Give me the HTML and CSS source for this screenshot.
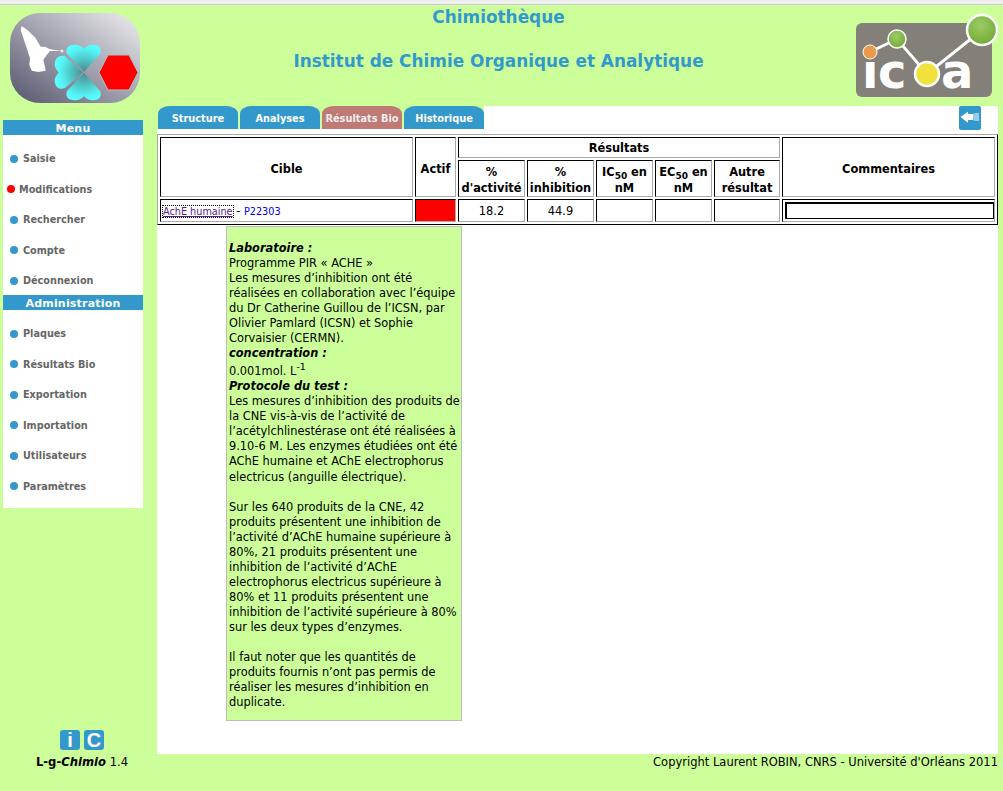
FILE: index.html
```html
<!DOCTYPE html>
<html lang="fr">
<head>
    <meta charset="UTF-8">
    <title>Chimiothèque</title>
    <link rel="stylesheet" href="styles.css">
</head>
<body>
    <header class="top">
        <svg class="logo-left" width="130" height="90" viewBox="0 0 130 90">
            <defs>
                <linearGradient id="plate" x1="0" y1="1" x2="1" y2="0">
                    <stop offset="0" stop-color="#55556c"/>
                    <stop offset="1" stop-color="#eeeef0"/>
                </linearGradient>
                <radialGradient id="petal" gradientUnits="userSpaceOnUse" cx="74" cy="59.5" r="30">
                    <stop offset="0" stop-color="#4a8a8c"/>
                    <stop offset="0.8" stop-color="#55f4f6"/>
                    <stop offset="1" stop-color="#5cffff"/>
                </radialGradient>
            </defs>
            <rect width="130" height="90" rx="30" fill="url(#plate)"/>
            <path d="M11.7 13 L18.3 17.7 L25 24.3 L30.7 33.7 L35 33.7 L40 36.3 L51.7 38 L40 38 L36.7 42 L33.3 47 L35 53.7 L35.7 57.7 L28.3 59 L21.7 57.7 L19.3 52 L20 45.3 L17.3 37 L14 27 L10.7 17 Z" fill="#fff"/>
            <circle cx="52" cy="38" r="1.6" fill="#e8e8e8"/>
            <path d="M74 59 L57 41 C55 36 58 32 63 32 C68 31 72 33 74 36 C76 33 80 31 85 32 C90 32 92 37 90 41 Z" fill="url(#petal)"/>
            <path d="M74 60 L57 78 C55 83 58 87 63 87 C68 88 72 86 74 83 C76 86 80 88 85 87 C90 87 92 82 90 78 Z" fill="url(#petal)"/>
            <path d="M73 59.5 L55 43 C50 42 46 44 45 49 C44 53 46 57 49 59.5 C46 62 44 66 45 70 C46 75 50 77 55 75 Z" fill="url(#petal)"/>
            <path d="M89 59.5 L98 42 H119 L128 59.5 L119 77 H98 Z" fill="#f00" stroke="#a8c4c8"/>
        </svg>
        <div class="titles">
            <h1>Chimiothèque</h1>
            <h2>Institut de Chimie Organique et Analytique</h2>
        </div>
        <svg class="logo-right" width="143" height="98" viewBox="0 0 143 98">
            <defs>
                <radialGradient id="leaf" cx="0.45" cy="0.35" r="0.7">
                    <stop offset="0" stop-color="#9ccc65"/>
                    <stop offset="1" stop-color="#6ea832"/>
                </radialGradient>
            </defs>
            <rect x="1" y="15" width="136" height="74" rx="6" fill="#848079"/>
            <path d="M15 44 L42 31 L72 66 L127 22" fill="none" stroke="#fff" stroke-width="3"/>
            <text x="7" y="80" class="icoa-text">ı</text>
            <text x="23" y="80" class="icoa-text">c</text>
            <text x="86" y="80" class="icoa-text">a</text>
            <circle cx="15" cy="44" r="7" fill="#e99a4b" stroke="#fff" stroke-width="1"/>
            <circle cx="42" cy="31" r="9" fill="url(#leaf)" stroke="#fff" stroke-width="1.5"/>
            <circle cx="72" cy="66" r="12" fill="#f0e13c" stroke="#fff" stroke-width="2.5"/>
            <circle cx="127" cy="22" r="15" fill="url(#leaf)" stroke="#fff" stroke-width="2.5"/>
        </svg>
    </header>

    <div class="page">
        <aside class="side">
            <nav class="menu">
                <div class="menu-title">Menu</div>
                <ul>
                    <li><a href="#">Saisie</a></li>
                    <li class="current"><a href="#">Modifications</a></li>
                    <li><a href="#">Rechercher</a></li>
                    <li><a href="#">Compte</a></li>
                    <li><a href="#">Déconnexion</a></li>
                </ul>
                <div class="menu-title">Administration</div>
                <ul>
                    <li><a href="#">Plaques</a></li>
                    <li><a href="#">Résultats Bio</a></li>
                    <li><a href="#">Exportation</a></li>
                    <li><a href="#">Importation</a></li>
                    <li><a href="#">Utilisateurs</a></li>
                    <li><a href="#">Paramètres</a></li>
                </ul>
            </nav>
            <div class="credits">
                <div class="badges">
                    <span class="badge">i</span>
                    <span class="badge">C</span>
                </div>
                <div class="version"><b>L-g-<i>Chimio</i></b> 1.4</div>
            </div>
        </aside>

        <main class="panel">
            <div class="tabs">
                <div class="tab-group">
                    <a class="tab" href="#">Structure</a>
                    <a class="tab" href="#">Analyses</a>
                    <a class="tab active" href="#">Résultats Bio</a>
                    <a class="tab" href="#">Historique</a>
                </div>
                <a class="back" href="#">
                    <svg width="22" height="24" viewBox="0 0 22 24">
                        <rect width="22" height="24" rx="2" fill="#3399cc"/>
                        <path d="M1.5 11 L9 5.7 V8 H14 V14 H9 V16.7 Z" fill="#fff"/>
                        <path d="M15 7.5 V14.5 M17 7 V15 M19 7 V15" stroke="#fff" stroke-width="1"/>
                    </svg>
                </a>
            </div>

            <table class="results">
                <colgroup>
                    <col class="c-cible"><col class="c-actif"><col class="c-pct1"><col class="c-pct2">
                    <col class="c-ic"><col class="c-ec"><col class="c-autre"><col class="c-comm">
                </colgroup>
                <tr class="r-head1">
                    <th class="tall" rowspan="2">Cible</th>
                    <th class="tall" rowspan="2">Actif</th>
                    <th colspan="5">Résultats</th>
                    <th class="tall" rowspan="2">Commentaires</th>
                </tr>
                <tr class="r-head2">
                    <th>%<br>d'activité</th>
                    <th>%<br>inhibition</th>
                    <th>IC<sub>50</sub> en<br>nM</th>
                    <th>EC<sub>50</sub> en<br>nM</th>
                    <th>Autre<br>résultat</th>
                </tr>
                <tr class="r-data">
                    <td class="target"><a class="seen" href="#">AchE humaine</a> - <a href="#">P22303</a></td>
                    <td class="flag"></td>
                    <td>18.2</td>
                    <td>44.9</td>
                    <td></td>
                    <td></td>
                    <td></td>
                    <td class="comment"><input type="text"></td>
                </tr>
            </table>

            <div class="note">
                <b><i>Laboratoire :</i></b><br>
                Programme PIR « ACHE »<br>
                Les mesures d’inhibition ont été réalisées en collaboration avec l’équipe du Dr Catherine Guillou de l’ICSN, par Olivier Pamlard (ICSN) et Sophie Corvaisier (CERMN).<br>
                <b><i>concentration :</i></b><br>
                0.001mol. L<sup>-1</sup><br>
                <b><i>Protocole du test :</i></b><br>
                Les mesures d’inhibition des produits de la CNE vis-à-vis de l’activité de l’acétylchlinestérase ont été réalisées à 9.10-6 M. Les enzymes étudiées ont été AChE humaine et AChE electrophorus electricus (anguille électrique).<br>
                <br>
                Sur les 640 produits de la CNE, 42 produits présentent une inhibition de l’activité d’AChE humaine supérieure à 80%, 21 produits présentent une inhibition de l’activité d’AChE electrophorus electricus supérieure à 80% et 11 produits présentent une inhibition de l’activité supérieure à 80% sur les deux types d’enzymes.<br>
                <br>
                Il faut noter que les quantités de produits fournis n’ont pas permis de réaliser les mesures d’inhibition en duplicate.
            </div>
        </main>

        <footer class="copy">Copyright Laurent ROBIN, CNRS - Université d'Orléans 2011</footer>
    </div>
</body>
</html>
```

FILE: styles.css
```css
* {
    box-sizing: border-box;
}

body {
    margin: 0;
    height: 791px;
    overflow: hidden;
    background: #ccff99;
    border-top: 4px solid #eeeeee;
    font-family: "DejaVu Sans", Verdana, sans-serif;
    font-size: 11.4px;
    line-height: 15px;
    color: #000;
}

/* header */
.top {
    display: flex;
    height: 102px;
    box-shadow: inset 0 1px 0 #cccccc;
}

.logo-left {
    flex: none;
    margin: 9px 0 0 10px;
}

.logo-right {
    flex: none;
    margin: 4px 5px 0 0;
}

.icoa-text {
    font-family: "DejaVu Sans", sans-serif;
    font-weight: bold;
    font-size: 48px;
    fill: #fff;
}

.titles {
    flex: 1;
    text-align: center;
    color: #3399cc;
    padding-left: 2px;
}

.titles h1 {
    margin: 3px 0 0;
    font-size: 16.9px;
    line-height: 20px;
}

.titles h2 {
    margin: 24px 0 0;
    font-size: 16.9px;
    line-height: 20px;
}

/* layout */
.page {
    display: grid;
    grid-template-columns: 157px 841px;
    grid-template-rows: 648px 20px;
}

.side {
    grid-row: 1 / 3;
    display: flex;
    flex-direction: column;
    padding: 14px 14px 0 3px;
}

.menu {
    background: #fff;
    height: 388px;
}

.menu-title {
    background: #3399cc;
    color: #fff;
    font-weight: bold;
    font-size: 11px;
    line-height: 17px;
    height: 15px;
    text-align: center;
    letter-spacing: 0.2px;
}

.menu ul + .menu-title {
    margin-top: -1px;
}

.menu ul {
    list-style: none;
    margin: 0;
    padding: 8.5px 0 0;
}

.menu li {
    display: flex;
    align-items: center;
    height: 30.5px;
    padding-left: 7px;
}

.menu li::before {
    content: "";
    width: 8px;
    height: 8px;
    border-radius: 50%;
    background: #3399cc;
    margin-right: 5px;
}

.menu li.current {
    padding-left: 4px;
}

.menu li.current::before {
    background: #ff0000;
    margin-right: 4px;
}

.menu a {
    color: #666666;
    font-weight: bold;
    font-size: 9.7px;
    text-decoration: none;
}

.credits {
    margin-top: auto;
    padding: 0 0 4px 18px;
    text-align: center;
    font-size: 11.6px;
}

.badges {
    display: flex;
    justify-content: center;
    gap: 4px;
    margin-bottom: 5px;
}

.badge {
    width: 20px;
    height: 20px;
    border-radius: 3px;
    background: #3399cc;
    color: #fff;
    font-family: "Liberation Sans", sans-serif;
    font-weight: bold;
    font-size: 20px;
    line-height: 20px;
}

/* main panel */
.panel {
    background: #fff;
}

.tabs {
    display: flex;
    align-items: flex-start;
    height: 28px;
}

.tab-group {
    display: flex;
    gap: 2px;
    padding-left: 1px;
    background: #ccff99;
}

.tab {
    width: 80px;
    height: 23px;
    border-radius: 12px 12px 0 0 / 8px 8px 0 0;
    background: #3399cc;
    color: #fff;
    font-weight: bold;
    font-size: 9.8px;
    line-height: 25px;
    text-align: center;
    text-decoration: none;
}

.tab.active {
    background: #bf7a75;
    color: #eeeeee;
}

.back {
    margin-left: auto;
    margin-right: 17px;
    height: 24px;
}

.results {
    width: 841px;
    table-layout: fixed;
    border-collapse: separate;
    border-spacing: 2px;
    border: 1px solid;
    border-color: #aaaaaa #000 #000 #aaaaaa;
}

.c-cible { width: 253px; }
.c-actif { width: 41px; }
.c-pct1 { width: 67px; }
.c-pct2 { width: 67px; }
.c-ic { width: 57px; }
.c-ec { width: 57px; }
.c-autre { width: 66px; }
.c-comm { width: 213px; }

.results th,
.results td {
    border: 1px solid;
    border-color: #000 #aaaaaa #aaaaaa #000;
    padding: 2px 0 0;
    text-align: center;
    font-size: 11.4px;
}

.results th {
    font-weight: bold;
}

.results th.tall {
    padding-top: 4px;
}

.r-head1 { height: 21px; }
.r-head2 { height: 37px; line-height: 16px; }
.r-data { height: 23px; }

.results sub {
    font-size: 9px;
    line-height: 0;
}

.results td.target {
    text-align: left;
    padding-left: 2px;
}

.target a {
    font-size: 9.7px;
    color: #0000ee;
    text-decoration: none;
}

.target a.seen {
    color: #551a8b;
    text-decoration: underline;
    outline: 1px dotted #000;
}

.results td.flag {
    background: #ff0000;
}

.results td.comment {
    padding: 2px 0 2px 2px;
}

.comment input {
    display: block;
    width: 209px;
    height: 17px;
    padding: 0;
    border-style: solid;
    border-width: 2px 1px 1px 2px;
    border-color: #000;
    background: #fff;
}

.note {
    width: 236px;
    height: 495px;
    margin: 1px 0 0 69px;
    padding: 14px 0 0 2px;
    background: #ccff99;
    border: 1px solid #bbbbbb;
    line-height: 15.05px;
}

.note sup {
    line-height: 11px;
}

.copy {
    grid-column: 2;
    text-align: right;
    padding-top: 1px;
    font-size: 11.5px;
}
```
